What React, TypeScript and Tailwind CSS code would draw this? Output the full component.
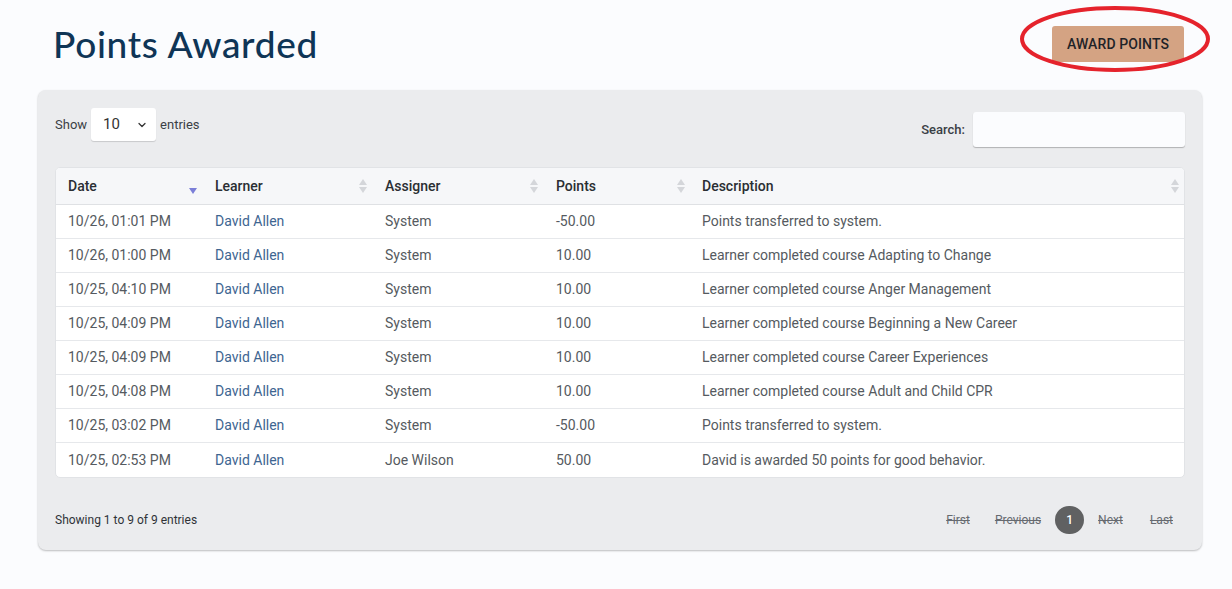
import { ChevronDown } from 'lucide-react'

const rows = [
  ['10/26, 01:01 PM', 'David Allen', 'System', '-50.00', 'Points transferred to system.'],
  ['10/26, 01:00 PM', 'David Allen', 'System', '10.00', 'Learner completed course Adapting to Change'],
  ['10/25, 04:10 PM', 'David Allen', 'System', '10.00', 'Learner completed course Anger Management'],
  ['10/25, 04:09 PM', 'David Allen', 'System', '10.00', 'Learner completed course Beginning a New Career'],
  ['10/25, 04:09 PM', 'David Allen', 'System', '10.00', 'Learner completed course Career Experiences'],
  ['10/25, 04:08 PM', 'David Allen', 'System', '10.00', 'Learner completed course Adult and Child CPR'],
  ['10/25, 03:02 PM', 'David Allen', 'System', '-50.00', 'Points transferred to system.'],
  ['10/25, 02:53 PM', 'David Allen', 'Joe Wilson', '50.00', 'David is awarded 50 points for good behavior.'],
]

function SortIcon({ active }: { active?: boolean }) {
  if (active) {
    return (
      <svg width="8" height="10" viewBox="0 0 8 10" className="mt-2">
        <path d="M0 3 L8 3 L4 9 Z" fill="#7b7fd8" />
      </svg>
    )
  }
  return (
    <svg width="8" height="14" viewBox="0 0 8 14">
      <path d="M0 6 L8 6 L4 0 Z" fill="#d4d6da" />
      <path d="M0 8 L8 8 L4 14 Z" fill="#d4d6da" />
    </svg>
  )
}

const cols = [
  { name: 'Date', w: 'w-[147px] pr-[18px]', active: true },
  { name: 'Learner', w: 'w-[170px] pr-[18px]' },
  { name: 'Assigner', w: 'w-[171px] pr-[18px]' },
  { name: 'Points', w: 'w-[146px] pr-[17px]' },
  { name: 'Description', w: 'flex-1 pr-[5px]' },
]

export default function App() {
  return (
    <div className="min-h-[589px] bg-[#fbfcfe] font-['Roboto',sans-serif] text-[#555a60]">
      <div className="flex items-center justify-between pl-[53px] pr-[48px] pt-[22px] pb-[24px]">
        <h1 className="font-['Lato',sans-serif] text-[37px] font-medium leading-[44px] tracking-[0.7px] text-[#0f3556]">
          Points Awarded
        </h1>
        <div className="relative">
          <button className="h-[36px] w-[132px] rounded-[3px] bg-[#d4a383] text-[14px] font-medium tracking-[0.1px] text-[#1f2328]">
            AWARD POINTS
          </button>
          <svg
            className="pointer-events-none absolute left-[-33px] top-[-21px]"
            width="192"
            height="68"
            viewBox="0 0 192 68"
          >
            <ellipse cx="96" cy="34" rx="93" ry="31" fill="none" stroke="#e5232c" strokeWidth="4" />
          </svg>
        </div>
      </div>

      <div className="mx-[38px] w-[1164px] rounded-[8px] bg-[#ebecee] px-[17px] pt-[18px] pb-[16px] shadow-[0_1px_2px_rgba(0,0,0,0.25)]">
        <div className="flex items-start justify-between">
          <div className="flex items-center text-[13px] text-[#3a3f45]">
            <span>Show</span>
            <div className="mx-[4px] flex h-[33px] w-[65px] items-center justify-between rounded-[3px] bg-white pl-3 pr-2 text-[15px] text-[#333] shadow-[0_1px_1px_rgba(0,0,0,0.15)]">
              <span>10</span>
              <ChevronDown size={12} strokeWidth={2.5} />
            </div>
            <span>entries</span>
          </div>
          <div className="mt-[4px] flex items-center text-[13px] font-medium text-[#3a3f45]">
            <span className="mr-[8px]">Search:</span>
            <div className="h-[35px] w-[212px] rounded-[3px] bg-[#fbfcfe] shadow-[0_1px_1px_rgba(0,0,0,0.25)]" />
          </div>
        </div>

        <div className="mt-[20px] overflow-hidden rounded-[5px] border border-[#e1e3e6] bg-white">
          <div className="flex h-[37px] items-center border-b border-[#dfe1e4] bg-[#f6f7f9] pl-[12px] text-[14px] font-medium text-[#2a2e33]">
            {cols.map((c) => (
              <div key={c.name} className={`${c.w} flex items-center justify-between`}>
                <span>{c.name}</span>
                <SortIcon active={c.active} />
              </div>
            ))}
          </div>
          {rows.map((r, i) => (
            <div
              key={i}
              className={`flex h-[34px] items-center pl-[12px] text-[14px] ${i < rows.length - 1 ? 'border-b border-[#e6e8eb]' : ''}`}
            >
              <div className="w-[147px]">{r[0]}</div>
              <div className="w-[170px] text-[#3e6591]">{r[1]}</div>
              <div className="w-[171px]">{r[2]}</div>
              <div className="w-[146px]">{r[3]}</div>
              <div className="flex-1">{r[4]}</div>
            </div>
          ))}
        </div>

        <div className="mt-[28px] flex items-center justify-between text-[12px] text-[#2f3338]">
          <span>Showing 1 to 9 of 9 entries</span>
          <div className="mr-[12px] flex items-center text-[#666a70]">
            <span className="mr-[25px] line-through">First</span>
            <span className="mr-[14px] line-through">Previous</span>
            <span className="flex h-[28px] w-[29px] items-center justify-center rounded-full bg-[#606162] font-medium text-white">
              1
            </span>
            <span className="ml-[14px] mr-[27px] line-through">Next</span>
            <span className="line-through">Last</span>
          </div>
        </div>
      </div>
    </div>
  )
}
